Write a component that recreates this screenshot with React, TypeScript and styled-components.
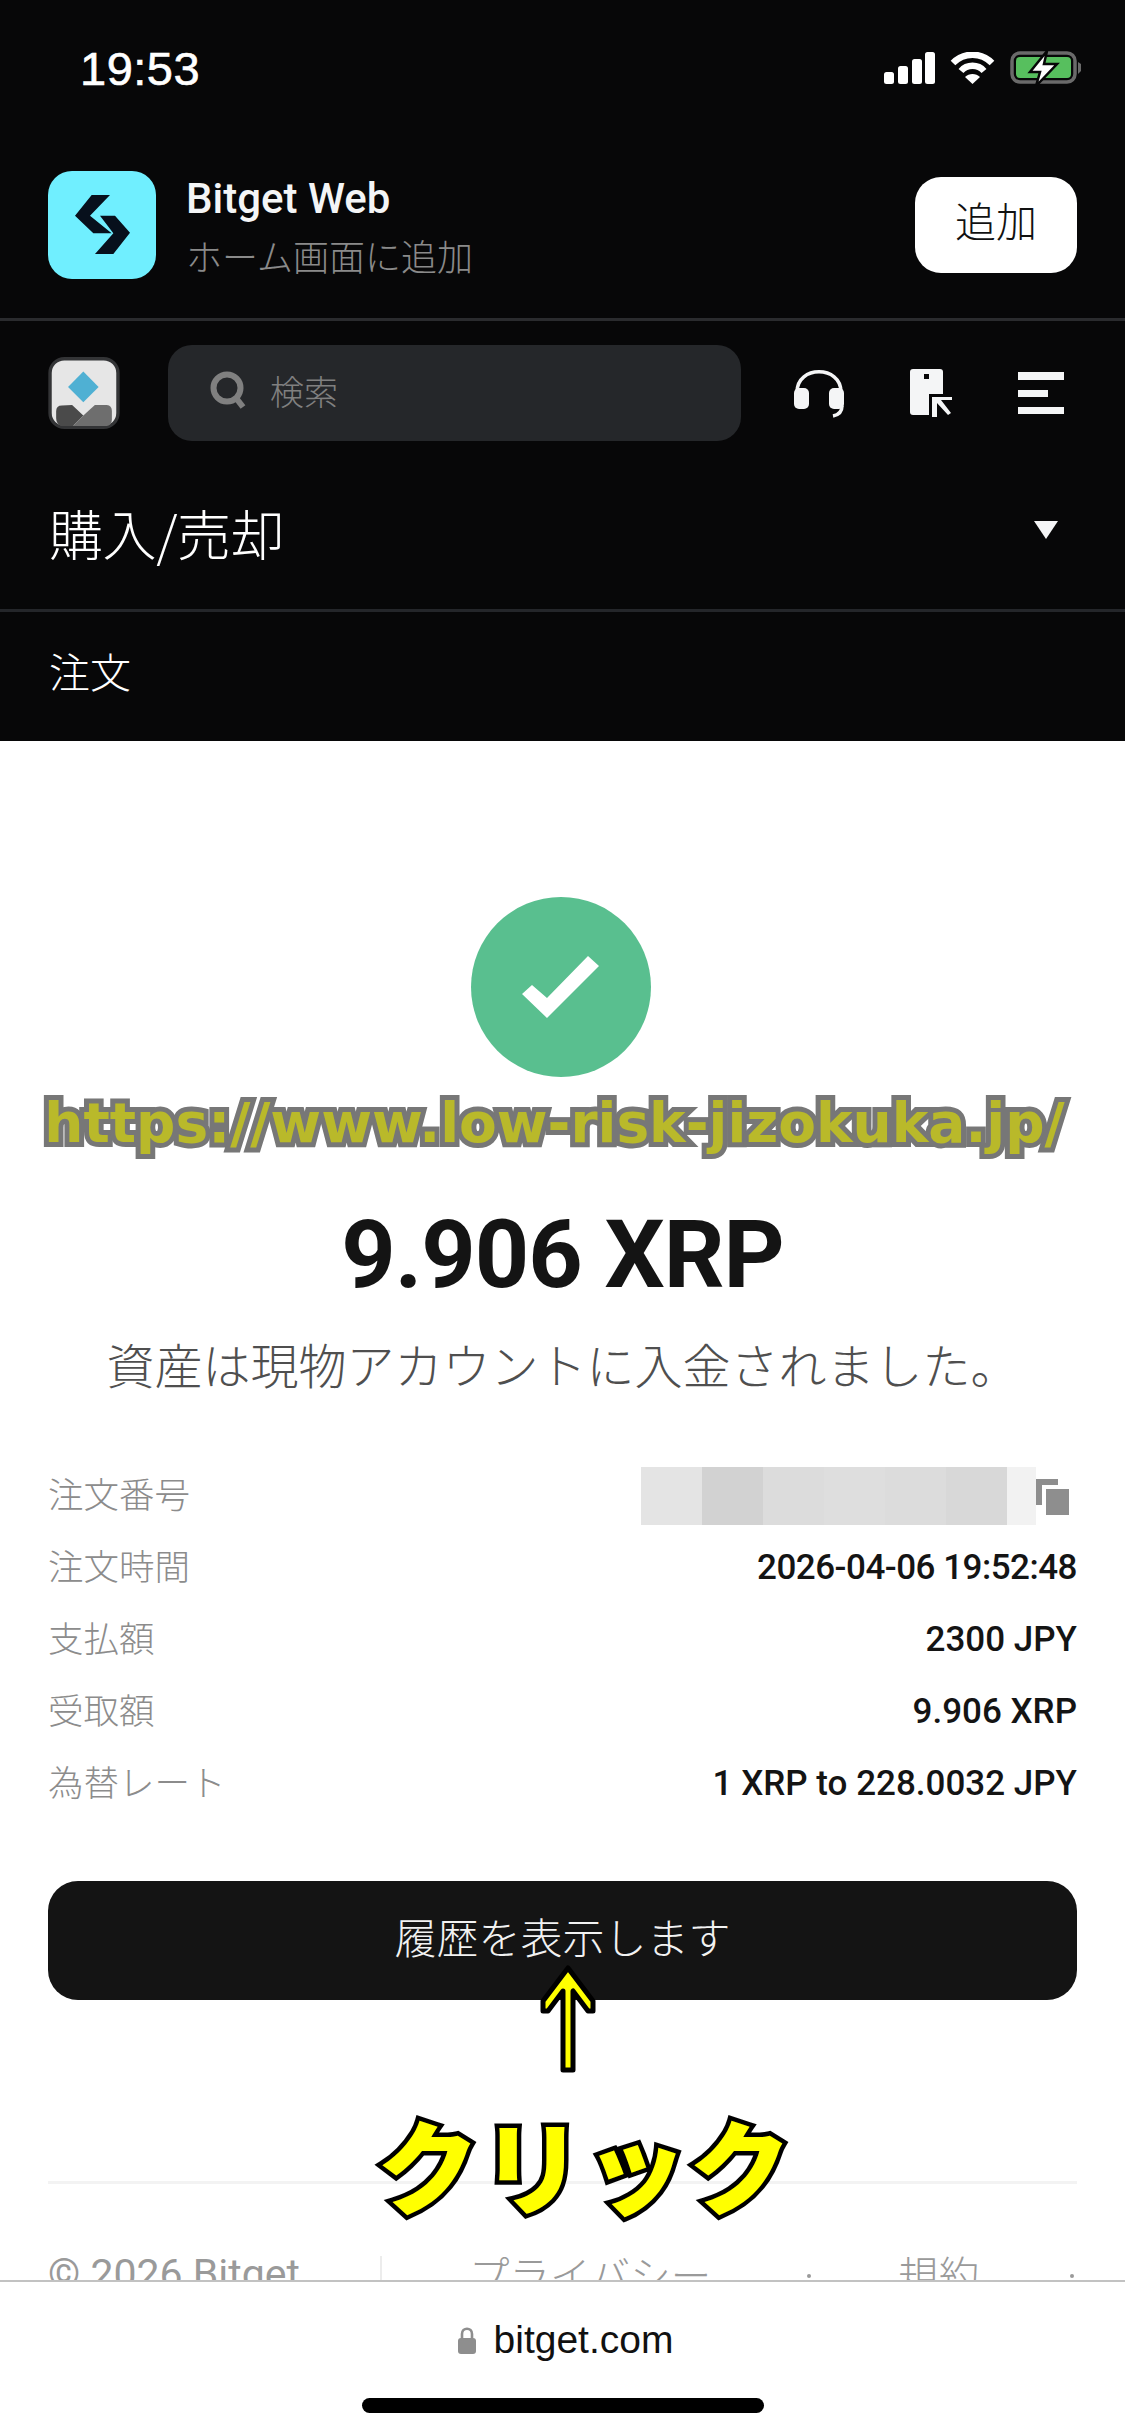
import React from "react";
import styled, { createGlobalStyle } from "styled-components";

const FONT = `Roboto, "Noto Sans CJK JP", sans-serif`;
const CJK = `"Noto Sans CJK JP", Roboto, sans-serif`;

const GlobalStyle = createGlobalStyle`
  html, body {
    margin: 0;
    padding: 0;
    background: #ffffff;
  }
  * {
    box-sizing: border-box;
  }
`;

const Page = styled.div`
  position: relative;
  display: flex;
  flex-direction: column;
  width: 1125px;
  height: 2436px;
  overflow: hidden;
  font-family: ${FONT};
  background: #ffffff;
`;

const Header = styled.header`
  flex: none;
  height: 741px;
  background: #070708;
  color: #ffffff;
`;

const StatusBar = styled.div`
  display: flex;
  align-items: center;
  justify-content: space-between;
  height: 172px;
  padding: 0 43px 36px 80px;
`;

const Time = styled.span`
  font-family: "Liberation Sans", sans-serif;
  font-size: 47px;
  font-weight: 400;
  letter-spacing: 0.5px;
  -webkit-text-stroke: 0.6px #ffffff;
`;

const StatusIcons = styled.div`
  display: flex;
  align-items: center;
  gap: 15px;
`;

const Banner = styled.div`
  display: flex;
  align-items: center;
  height: 149px;
  padding: 0 48px 41px;
  border-bottom: 3px solid #2a2b2e;
`;

const AppIcon = styled.div`
  flex: none;
  width: 108px;
  height: 108px;
  border-radius: 24px;
  background: #70efff;
  display: flex;
`;

const BannerText = styled.div`
  flex: 1;
  display: flex;
  flex-direction: column;
  gap: 11px;
  margin-left: 30px;
  padding-top: 1px;
`;

const BannerTitle = styled.div`
  font-size: 42px;
  line-height: 48px;
  font-weight: 500;
  color: #f4f5f6;
`;

const BannerSub = styled.div`
  font-family: ${CJK};
  font-size: 36px;
  line-height: 42px;
  font-weight: 300;
  color: #8a8a8a;
`;

const AddButton = styled.button`
  flex: none;
  width: 162px;
  height: 96px;
  padding: 0 0 11px;
  border: none;
  border-radius: 26px;
  background: #ffffff;
  color: #111111;
  font-family: ${CJK};
  font-size: 41px;
  font-weight: 300;
`;

const NavRow = styled.div`
  display: flex;
  align-items: center;
  height: 120px;
  padding: 24px 0 0 48px;
`;

const Avatar = styled.div`
  flex: none;
  width: 72px;
  height: 72px;
  display: flex;
`;

const SearchBox = styled.div`
  flex: none;
  display: flex;
  align-items: center;
  gap: 24px;
  width: 573px;
  height: 96px;
  margin-left: 48px;
  padding: 0 0 6px 42px;
  border-radius: 24px;
  background: #25272a;
  color: #808080;
  font-family: ${CJK};
  font-size: 34px;
  font-weight: 300;
`;

const NavIcon = styled.span<{ $left: number }>`
  flex: none;
  display: flex;
  margin-left: ${(p) => p.$left}px;
`;

const TitleRow = styled.div`
  display: flex;
  align-items: center;
  justify-content: space-between;
  height: 171px;
  padding: 14px 67px 0 49px;
  border-bottom: 3px solid #24262a;
`;

const PageTitle = styled.div`
  font-family: ${CJK};
  font-size: 54px;
  font-weight: 300;
  letter-spacing: -0.4px;
  color: #ffffff;
`;

const Caret = styled.span`
  width: 0;
  height: 0;
  margin-top: -4px;
  border-left: 12px solid transparent;
  border-right: 12px solid transparent;
  border-top: 18px solid #f4f5f6;
`;

const OrderTab = styled.div`
  display: flex;
  align-items: center;
  height: 126px;
  padding: 0 0 11px 49px;
  font-family: ${CJK};
  font-size: 41px;
  font-weight: 300;
  color: #ffffff;
`;

const Main = styled.main`
  flex: 1;
  min-height: 0;
  overflow: hidden;
  display: flex;
  flex-direction: column;
  align-items: stretch;
  padding: 156px 48px 0;
`;

const SuccessMark = styled.div`
  align-self: center;
  flex: none;
  width: 180px;
  height: 180px;
  margin-right: 4px;
  border-radius: 50%;
  background: #59bf8f;
  display: flex;
  align-items: center;
  justify-content: center;
`;

const Amount = styled.div`
  flex: none;
  margin-top: 130px;
  height: 96px;
  text-align: center;
  font-size: 95px;
  line-height: 96px;
  font-weight: 700;
  letter-spacing: -1px;
  color: #141414;
`;

const Message = styled.div`
  flex: none;
  margin-top: 25px;
  height: 70px;
  text-align: center;
  font-family: ${CJK};
  font-size: 48px;
  line-height: 70px;
  font-weight: 300;
  color: #4f4f4f;
`;

const Rows = styled.div`
  flex: none;
  margin-top: 61px;
  display: flex;
  flex-direction: column;
`;

const Row = styled.div`
  display: flex;
  align-items: center;
  justify-content: space-between;
  height: 72px;
`;

const Label = styled.span`
  padding-bottom: 5px;
  font-family: ${CJK};
  font-size: 35.5px;
  font-weight: 300;
  color: #8c8c8c;
`;

const Value = styled.span<{ $tight?: boolean }>`
  font-size: 35px;
  font-weight: 500;
  letter-spacing: ${(p) => (p.$tight ? "-0.5px" : "0")};
  color: #141414;
`;

const Masked = styled.div`
  display: flex;
  align-items: stretch;
  height: 58px;
  margin-top: 2px;
`;

const MaskCell = styled.span<{ $w: number; $c: string }>`
  width: ${(p) => p.$w}px;
  background: ${(p) => p.$c};
`;

const CopyIcon = styled.span`
  display: flex;
  align-self: flex-end;
  margin: 0 8px 10px 0;
`;

const HistoryButton = styled.button`
  flex: none;
  height: 119px;
  margin-top: 62px;
  padding: 0 0 10px;
  border: none;
  border-radius: 30px;
  background: #141414;
  color: #f2f2f2;
  font-family: ${CJK};
  font-size: 42px;
  font-weight: 300;
`;

const FooterRule = styled.div`
  flex: none;
  height: 3px;
  margin-top: 181px;
  background: #f3f3f3;
`;

const FooterLinks = styled.div`
  flex: none;
  display: flex;
  align-items: flex-start;
  height: 60px;
  margin-top: 72px;
  font-family: ${CJK};
  font-size: 40.5px;
  line-height: 36px;
  font-weight: 300;
  color: #9a9a9a;
  white-space: nowrap;
`;

const Copyright = styled.span`
  flex: none;
  width: 334px;
  height: 60px;
  border-right: 2px solid #ececec;
  font-family: ${FONT};
  font-size: 41px;
  font-weight: 400;
`;

const FooterLink = styled.span<{ $left: number }>`
  flex: none;
  margin-left: ${(p) => p.$left}px;
`;

const FooterDot = styled.span<{ $left: number }>`
  flex: none;
  width: 4px;
  height: 4px;
  margin: 18px 0 0 ${(p) => p.$left}px;
  border-radius: 50%;
  background: #9a9a9a;
`;

const BrowserBar = styled.div`
  flex: none;
  display: flex;
  flex-direction: column;
  align-items: center;
  height: 156px;
  border-top: 2px solid #c2c2c2;
  background: #ffffff;
`;

const UrlRow = styled.div`
  display: flex;
  align-items: center;
  gap: 17px;
  height: 116px;
  margin-left: 5px;
  font-family: "Liberation Sans", sans-serif;
  font-size: 39px;
  color: #111111;
`;

const HomeIndicator = styled.div`
  width: 402px;
  height: 15px;
  border-radius: 8px;
  background: #000000;
`;

/* the blog author's annotations laid over the screenshot */
const Watermark = styled.div`
  position: absolute;
  left: -16px;
  right: 0;
  top: 1087px;
  text-align: center;
  font-family: "DejaVu Sans", sans-serif;
  font-size: 55px;
  line-height: 72px;
  font-weight: 700;
  color: #b9b92a;
  -webkit-text-stroke: 10px #777777;
  paint-order: stroke fill;
  white-space: nowrap;
`;

const ArrowMark = styled.svg`
  position: absolute;
  left: 539px;
  top: 1965px;
`;

const ClickLabel = styled.div`
  position: absolute;
  left: 377px;
  top: 2088px;
  font-family: "Noto Sans CJK JP", sans-serif;
  font-size: 102px;
  line-height: 150px;
  font-weight: 900;
  letter-spacing: 2px;
  color: #ffff00;
  -webkit-text-stroke: 9px #000000;
  paint-order: stroke fill;
  white-space: nowrap;
`;

const MASK = [
  { w: 61, c: "#e4e4e4" },
  { w: 61, c: "#d2d2d2" },
  { w: 61, c: "#dcdcdc" },
  { w: 61, c: "#dedede" },
  { w: 61, c: "#dcdcdc" },
  { w: 61, c: "#d8d8d8" },
  { w: 29, c: "#f2f2f2" },
];

const DETAILS = [
  { label: "注文時間", value: "2026-04-06 19:52:48", tight: true },
  { label: "支払額", value: "2300 JPY" },
  { label: "受取額", value: "9.906 XRP" },
  { label: "為替レート", value: "1 XRP to 228.0032 JPY" },
];

const SignalIcon = () => (
  <svg width="51" height="32" viewBox="0 0 51 32" fill="#ffffff">
    <rect x="0" y="20" width="10" height="12" rx="2.5" />
    <rect x="14" y="14" width="10" height="18" rx="2.5" />
    <rect x="28" y="7" width="10" height="25" rx="2.5" />
    <rect x="41" y="0" width="10" height="32" rx="2.5" />
  </svg>
);

const WifiIcon = () => (
  <svg width="45" height="32" viewBox="0 0 45 32" fill="none" stroke="#ffffff" strokeWidth="6.5">
    <path d="M3 11 C14 0 31 0 42 11" />
    <path d="M11 19 C17 12 28 12 34 19" />
    <path d="M22.5 32 L15 25 C19 21 26 21 30 25 Z" fill="#ffffff" stroke="none" />
  </svg>
);

const BatteryIcon = () => (
  <svg width="72" height="36" viewBox="0 0 72 36">
    <rect x="2" y="3" width="63" height="29" rx="8" fill="none" stroke="#6a6a6a" strokeWidth="3.5" />
    <rect x="6" y="7" width="55" height="21" rx="4" fill="#57bf5e" />
    <path d="M68 12 L71 14 L71 21 L68 24 Z" fill="#6a6a6a" />
    <path d="M37 1 L20 22 L30 22 L26 36 L47 14 L34 14 Z" fill="#ffffff" stroke="#070708" strokeWidth="2.5" />
  </svg>
);

const BitgetLogo = () => (
  <svg width="108" height="108" viewBox="0 0 324 324">
    <path d="M186 72 L131 72 L81 134 L136 187 L191 187 L126 134 Z" fill="#07101c" />
    <path d="M156 134 L201 134 L246 185 L196 249 L141 249 L196 187 Z" fill="#07101c" />
  </svg>
);

const AvatarLogo = () => (
  <svg width="72" height="72" viewBox="0 0 210 212">
    <rect x="5" y="5" width="200" height="202" rx="42" fill="#e6e6e6" stroke="#333436" strokeWidth="10" />
    <path d="M103 43 L148 88 L103 133 L58 88 Z" fill="#4fb0d3" />
    <path d="M23 160 Q23 143 40 143 L70 141 L103 172 L72 203 L38 203 Q23 196 23 180 Z" fill="#4a4a4a" />
    <path d="M103 172 L137 141 L172 141 Q187 143 187 158 L187 185 Q187 203 170 203 L72 203 Z" fill="#6e6e6e" />
  </svg>
);

const SearchIcon = () => (
  <svg width="36" height="38" viewBox="0 0 36 38" fill="none" stroke="#808080">
    <circle cx="17" cy="17" r="13.5" strokeWidth="6" />
    <path d="M26 27 L33 36" strokeWidth="6" />
  </svg>
);

const HeadsetIcon = () => (
  <svg width="50" height="50" viewBox="0 0 50 50" fill="#f4f5f6">
    <path d="M3 24 C3 -3 47 -3 47 24" fill="none" stroke="#f4f5f6" strokeWidth="3.5" />
    <rect x="0" y="20" width="15" height="21" rx="5" />
    <rect x="35" y="20" width="15" height="21" rx="5" />
    <path d="M48 38 C48 44 44 47 39 48" fill="none" stroke="#f4f5f6" strokeWidth="3.5" />
  </svg>
);

const ShareIcon = () => (
  <svg width="42" height="48" viewBox="0 0 42 48" fill="#f4f5f6">
    <rect x="0" y="0" width="33" height="46" rx="3" />
    <rect x="14" y="5" width="5" height="5" fill="#070708" />
    <rect x="19" y="25" width="23" height="23" fill="#070708" />
    <path d="M22 28 L42 28 L42 31 L31 31 L41 44 L38 46 L27 34 L27 48 L22 48 Z" />
  </svg>
);

const MenuIcon = () => (
  <svg width="46" height="42" viewBox="0 0 46 42" fill="#f4f5f6">
    <rect x="0" y="0" width="46" height="8" />
    <rect x="0" y="18" width="30" height="7" />
    <rect x="0" y="35" width="46" height="7" />
  </svg>
);

const CheckIcon = () => (
  <svg width="77" height="62" viewBox="0 0 77 62" fill="#ffffff">
    <path d="M0 38 L10 29 L25 42 L66 0 L77 10 L25 62 Z" />
  </svg>
);

const CopyGlyph = () => (
  <svg width="33" height="36" viewBox="0 0 33 36" fill="#8e8e8e">
    <path d="M0 0 L22 0 L22 6 L6 6 L6 26 L0 26 Z" />
    <rect x="10" y="10" width="23" height="26" />
  </svg>
);

const LockIcon = () => (
  <svg width="20" height="27" viewBox="0 0 20 27" fill="#8e8e8e">
    <path d="M5 12 L5 7 C5 0 15 0 15 7 L15 12" fill="none" stroke="#8e8e8e" strokeWidth="2.6" />
    <rect x="1" y="11" width="18" height="16" rx="3" />
  </svg>
);

const App = () => {
  return (
    <Page>
      <GlobalStyle />
      <Header>
        <StatusBar>
          <Time>19:53</Time>
          <StatusIcons>
            <SignalIcon />
            <WifiIcon />
            <BatteryIcon />
          </StatusIcons>
        </StatusBar>
        <Banner>
          <AppIcon>
            <BitgetLogo />
          </AppIcon>
          <BannerText>
            <BannerTitle>Bitget Web</BannerTitle>
            <BannerSub>ホーム画面に追加</BannerSub>
          </BannerText>
          <AddButton>追加</AddButton>
        </Banner>
        <NavRow>
          <Avatar>
            <AvatarLogo />
          </Avatar>
          <SearchBox>
            <SearchIcon />
            検索
          </SearchBox>
          <NavIcon $left={53}>
            <HeadsetIcon />
          </NavIcon>
          <NavIcon $left={66}>
            <ShareIcon />
          </NavIcon>
          <NavIcon $left={66}>
            <MenuIcon />
          </NavIcon>
        </NavRow>
        <TitleRow>
          <PageTitle>購入/売却</PageTitle>
          <Caret />
        </TitleRow>
        <OrderTab>注文</OrderTab>
      </Header>

      <Main>
        <SuccessMark>
          <CheckIcon />
        </SuccessMark>
        <Amount>9.906 XRP</Amount>
        <Message>資産は現物アカウントに入金されました。</Message>
        <Rows>
          <Row>
            <Label>注文番号</Label>
            <Masked>
              {MASK.map((m, i) => (
                <MaskCell key={i} $w={m.w} $c={m.c} />
              ))}
              <CopyIcon>
                <CopyGlyph />
              </CopyIcon>
            </Masked>
          </Row>
          {DETAILS.map((d) => (
            <Row key={d.label}>
              <Label>{d.label}</Label>
              <Value $tight={d.tight}>{d.value}</Value>
            </Row>
          ))}
        </Rows>
        <HistoryButton>履歴を表示します</HistoryButton>
        <FooterRule />
        <FooterLinks>
          <Copyright>© 2026 Bitget</Copyright>
          <FooterLink $left={87}>プライバシー</FooterLink>
          <FooterDot $left={96} />
          <FooterLink $left={87}>規約</FooterLink>
          <FooterDot $left={91} />
        </FooterLinks>
      </Main>

      <BrowserBar>
        <UrlRow>
          <LockIcon />
          bitget.com
        </UrlRow>
        <HomeIndicator />
      </BrowserBar>

      <Watermark>https://www.low-risk-jizokuka.jp/</Watermark>
      <ArrowMark width="58" height="108" viewBox="0 0 58 108">
        <path
          d="M29 3 L54 36 L54 46 L49 46 L34 26 L34 105 L24 105 L24 26 L9 46 L4 46 L4 36 Z"
          fill="#ffff00"
          stroke="#000000"
          strokeWidth="5"
          strokeLinejoin="round"
        />
      </ArrowMark>
      <ClickLabel>クリック</ClickLabel>
    </Page>
  );
};

export default App;
